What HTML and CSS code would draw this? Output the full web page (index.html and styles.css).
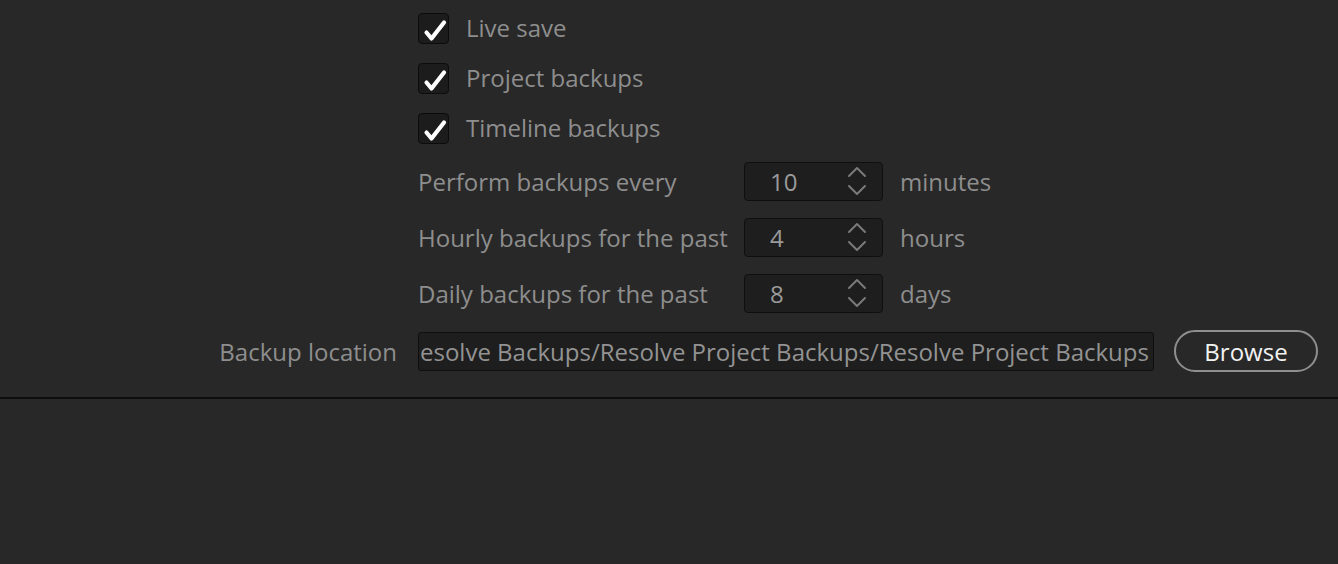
FILE: index.html
```html
<!DOCTYPE html>
<html>
<head>
<meta charset="utf-8">
<link rel="stylesheet" href="styles.css">
</head>
<body>
<div class="panel">
  <div class="row check-row"><span class="gutter"></span><span class="checkbox"><svg viewBox="0 0 29 29" width="29" height="29"><path d="M7.5 18.5 L12.5 24.5 L25 8.5" fill="none" stroke="#fff" stroke-width="4.2" stroke-linecap="round" stroke-linejoin="round"/></svg></span><span class="label">Live save</span></div>
  <div class="row check-row"><span class="gutter"></span><span class="checkbox"><svg viewBox="0 0 29 29" width="29" height="29"><path d="M7.5 18.5 L12.5 24.5 L25 8.5" fill="none" stroke="#fff" stroke-width="4.2" stroke-linecap="round" stroke-linejoin="round"/></svg></span><span class="label">Project backups</span></div>
  <div class="row check-row"><span class="gutter"></span><span class="checkbox"><svg viewBox="0 0 29 29" width="29" height="29"><path d="M7.5 18.5 L12.5 24.5 L25 8.5" fill="none" stroke="#fff" stroke-width="4.2" stroke-linecap="round" stroke-linejoin="round"/></svg></span><span class="label">Timeline backups</span></div>

  <div class="row spin-row"><span class="gutter"></span><span class="spin-label">Perform backups every</span><div class="spin"><span class="val">10</span><svg class="arrows" viewBox="0 0 20 32" width="20" height="32"><path d="M2 11 L10 3 L18 11 M2 21 L10 29 L18 21" fill="none" stroke="#7a7a7a" stroke-width="2" stroke-linecap="round" stroke-linejoin="round"/></svg></div><span class="unit">minutes</span></div>
  <div class="row spin-row"><span class="gutter"></span><span class="spin-label">Hourly backups for the past</span><div class="spin"><span class="val">4</span><svg class="arrows" viewBox="0 0 20 32" width="20" height="32"><path d="M2 11 L10 3 L18 11 M2 21 L10 29 L18 21" fill="none" stroke="#7a7a7a" stroke-width="2" stroke-linecap="round" stroke-linejoin="round"/></svg></div><span class="unit">hours</span></div>
  <div class="row spin-row"><span class="gutter"></span><span class="spin-label">Daily backups for the past</span><div class="spin"><span class="val">8</span><svg class="arrows" viewBox="0 0 20 32" width="20" height="32"><path d="M2 11 L10 3 L18 11 M2 21 L10 29 L18 21" fill="none" stroke="#7a7a7a" stroke-width="2" stroke-linecap="round" stroke-linejoin="round"/></svg></div><span class="unit">days</span></div>

  <div class="row loc-row"><span class="gutter loc-label">Backup location</span><div class="path-field"><span class="path-text">esolve Backups/Resolve Project Backups/Resolve Project Backups</span></div><button class="browse">Browse</button></div>
</div>
<div class="divider"></div>
</body>
</html>
```
FILE: styles.css
```css
html, body {
  margin: 0;
  padding: 0;
  background: #282828;
  height: 100%;
  overflow: hidden;
}
body {
  font-family: "Open Sans", "Noto Sans", sans-serif;
  font-size: 24px;
  color: #8e8e8e;
}
.panel {
  padding-top: 3px;
  padding-bottom: 16px;
}
.row {
  display: flex;
  align-items: center;
}
.gutter {
  width: 418px;
  flex: none;
}
.check-row {
  height: 50px;
}
.checkbox {
  width: 29px;
  height: 29px;
  border: 1px solid #0c0c0c;
  border-radius: 4px;
  background: #1c1c1c;
  display: flex;
  align-items: center;
  justify-content: center;
  flex: none;
}
.checkbox svg {
  display: block;
}
.label {
  margin-left: 17px;
  padding-bottom: 1px;
}
.spin-row {
  height: 56px;
}
.spin-label {
  width: 326px;
  flex: none;
}
.spin {
  width: 137px;
  height: 37px;
  border: 1px solid #0f0f0f;
  border-radius: 4px;
  background: #1e1e1e;
  display: flex;
  align-items: center;
  flex: none;
  box-sizing: content-box;
}
.val {
  width: 80px;
  padding-left: 25px;
  box-sizing: border-box;
  color: #9a9a9a;
}
.arrows {
  margin-left: 22px;
}
.unit {
  margin-left: 17px;
}
.loc-row {
  height: 60px;
}
.loc-label {
  text-align: right;
  padding-right: 21px;
  box-sizing: border-box;
}
.path-field {
  width: 734px;
  height: 37px;
  border: 1px solid #0f0f0f;
  border-radius: 3px;
  background: #1e1e1e;
  overflow: hidden;
  white-space: nowrap;
  display: flex;
  align-items: center;
  flex: none;
}
.path-text {
  padding-left: 1px;
  color: #939393;
}
.browse {
  margin-left: 20px;
  width: 144px;
  height: 42px;
  border: 2px solid #8f8f8f;
  border-radius: 21px;
  background: #282828;
  color: #f2f2f2;
  font-family: "Open Sans", "Noto Sans", sans-serif;
  font-size: 24px;
  padding: 0;
  flex: none;
}
.divider {
  height: 2px;
  background: #0d0d0d;
}
```
